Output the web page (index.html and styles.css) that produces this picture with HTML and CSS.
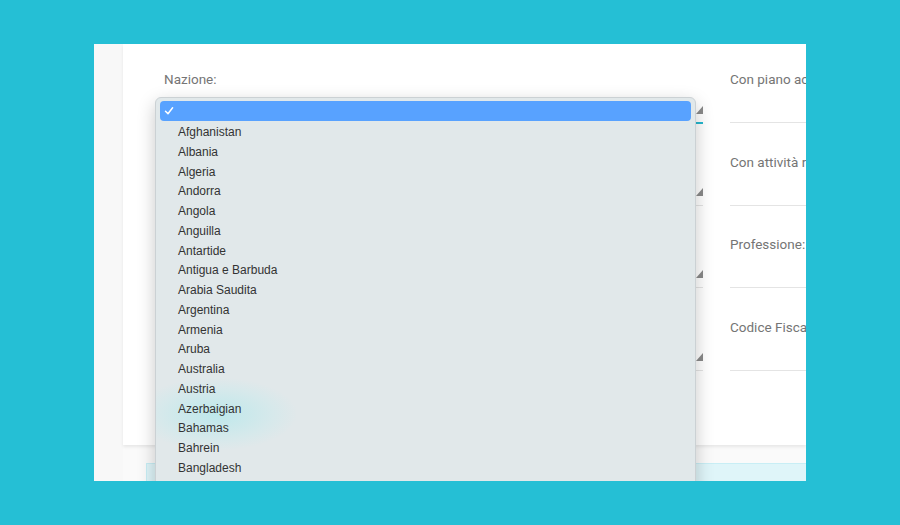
FILE: index.html
```html
<!DOCTYPE html>
<html lang="it">
<head>
	<meta charset="UTF-8">
	<title>Profilo cliente</title>
	<link rel="stylesheet" href="styles.css">
</head>
<body>
	<div class="window">
		<div class="gutter"></div>
		<div class="main">
			<div class="card">
				<div class="cols">
					<div class="col">
						<div class="field">
							<div class="label">Nazione:</div>
							<div class="select focus"><span class="tri"></span></div>
						</div>
						<div class="field">
							<div class="label"></div>
							<div class="select"><span class="tri"></span></div>
						</div>
						<div class="field">
							<div class="label"></div>
							<div class="select"><span class="tri"></span></div>
						</div>
						<div class="field">
							<div class="label"></div>
							<div class="select"><span class="tri"></span></div>
						</div>
					</div>
					<div class="col side">
						<div class="field">
							<div class="label">Con piano accumulo:</div>
							<div class="select"></div>
						</div>
						<div class="field">
							<div class="label">Con attività redditizia:</div>
							<div class="select"></div>
						</div>
						<div class="field">
							<div class="label">Professione:</div>
							<div class="select"></div>
						</div>
						<div class="field">
							<div class="label">Codice Fiscale:</div>
							<div class="select"></div>
						</div>
					</div>
				</div>

				<!-- menu aperto della select Nazione -->
				<div class="menu">
					<div class="ripple"></div>
					<div class="opt sel">
						<svg class="check" width="10" height="10" viewBox="0 0 10 10"><path d="M1.5 5.2 L4 7.8 L8.6 1.8" fill="none" stroke="#fff" stroke-width="1.5" stroke-linecap="round" stroke-linejoin="round"/></svg>
					</div>
					<div class="opt">Afghanistan</div>
					<div class="opt">Albania</div>
					<div class="opt">Algeria</div>
					<div class="opt">Andorra</div>
					<div class="opt">Angola</div>
					<div class="opt">Anguilla</div>
					<div class="opt">Antartide</div>
					<div class="opt">Antigua e Barbuda</div>
					<div class="opt">Arabia Saudita</div>
					<div class="opt">Argentina</div>
					<div class="opt">Armenia</div>
					<div class="opt">Aruba</div>
					<div class="opt">Australia</div>
					<div class="opt">Austria</div>
					<div class="opt">Azerbaigian</div>
					<div class="opt">Bahamas</div>
					<div class="opt">Bahrein</div>
					<div class="opt">Bangladesh</div>
				</div>
			</div>
			<div class="bar"></div>
		</div>
	</div>
</body>
</html>
```

FILE: styles.css
```css
*{margin: 0;padding: 0;box-sizing: border-box;}
body {
	background: #25bfd5;
	font-family: Roboto, "Liberation Sans", sans-serif;
}
.window {
	width: 712px;
	height: 437px;
	margin: 44px 0 0 94px;
	display: flex;
	overflow: hidden;
	background: #fafafa;
}
.gutter {
	width: 29px;
	flex-shrink: 0;
	background: #f8f8f8;
}
.main {
	flex: 1;
	min-width: 0;
	display: flex;
	flex-direction: column;
}
.card {
	position: relative;
	height: 401px;
	background: #fff;
	padding: 27px 0 0 41px;
	box-shadow: 0 2px 3px rgba(0,0,0,0.08);
}
.cols {
	display: flex;
	gap: 27px;
}
.col {
	width: 539px;
	flex-shrink: 0;
}
.col.side {
	width: 200px;
}
.field {
	height: 82.5px;
}
.label {
	height: 16px;
	font-size: 13.5px;
	line-height: 16px;
	color: #757575;
	white-space: nowrap;
}
.select {
	position: relative;
	height: 36px;
	border-bottom: 1px solid #e4e4e4;
}
.select.focus {
	border-bottom: 2px solid #26b8cf;
	height: 37px;
}
.tri {
	position: absolute;
	right: 0;
	bottom: 9px;
	width: 0;
	height: 0;
	border-left: 7px solid transparent;
	border-bottom: 8px solid #8a8a8a;
}
.focus .tri {
	bottom: 8px;
}

.menu {
	position: absolute;
	left: 32px;
	top: 53px;
	width: 541px;
	height: 420px;
	padding: 3px 4px;
	background: #e1e8ea;
	border: 1px solid #cbd1d4;
	border-radius: 6px;
	box-shadow: 0 6px 18px rgba(0,0,0,0.22);
	font-family: "Liberation Sans", Arial, sans-serif;
	font-size: 12px;
	color: #333;
	overflow: hidden;
}
.opt {
	position: relative;
	height: 19.76px;
	line-height: 19.76px;
	padding: 2px 0 0 18px;
}
.opt.sel {
	height: 20px;
	padding: 0;
	background: #58a2ff;
	border-radius: 4px;
}
.check {
	position: absolute;
	left: 4px;
	top: 5px;
}
.ripple {
	position: absolute;
	left: -20px;
	top: 280px;
	width: 160px;
	height: 72px;
	background: radial-gradient(ellipse at center, rgba(165,232,236,0.6) 0%, rgba(190,235,238,0.3) 50%, rgba(225,232,234,0) 72%);
}
.bar {
	margin: 18px 0 0 23px;
	flex: 1;
	background: #dff5f9;
	border-top: 1px solid #c8eef5;
	border-left: 1px solid #c8eef5;
}
```
